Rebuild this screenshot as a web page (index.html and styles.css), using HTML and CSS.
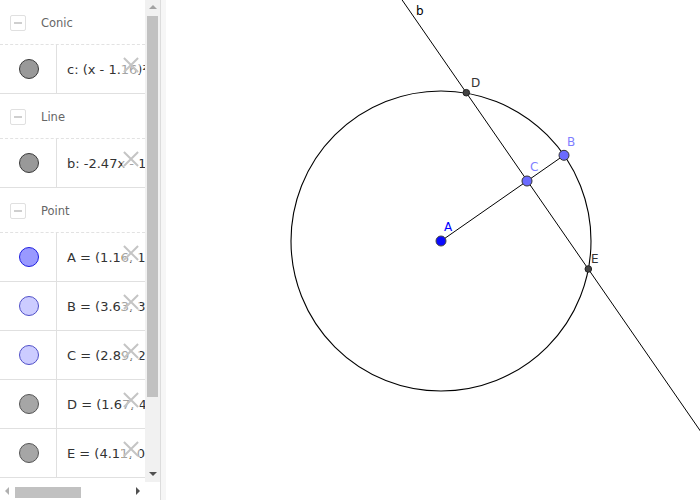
FILE: index.html
```html
<!DOCTYPE html>
<html>
<head>
<meta charset="utf-8">
<link rel="stylesheet" href="styles.css">
</head>
<body>
<div class="app">
  <aside class="algebra">
    <div class="list">
      <div class="group">
        <span class="toggle"></span><span class="group-name">Conic</span>
      </div>
      <div class="item">
        <div class="mark"><span class="dot dot-gray"></span></div>
        <div class="expr">c: (x - 1.16)² + (y - 1.19)² = 25</div>
        <span class="del"></span>
      </div>
      <div class="group">
        <span class="toggle"></span><span class="group-name">Line</span>
      </div>
      <div class="item">
        <div class="mark"><span class="dot dot-gray"></span></div>
        <div class="expr">b: -2.47x - 1.72y = -4.24</div>
        <span class="del"></span>
      </div>
      <div class="group">
        <span class="toggle"></span><span class="group-name">Point</span>
      </div>
      <div class="item">
        <div class="mark"><span class="dot dot-blue"></span></div>
        <div class="expr">A = (1.16, 1.19)</div>
        <span class="del"></span>
      </div>
      <div class="item">
        <div class="mark"><span class="dot dot-light"></span></div>
        <div class="expr">B = (3.63, 3.48)</div>
        <span class="del"></span>
      </div>
      <div class="item">
        <div class="mark"><span class="dot dot-light"></span></div>
        <div class="expr">C = (2.89, 2.4)</div>
        <span class="del"></span>
      </div>
      <div class="item">
        <div class="mark"><span class="dot dot-pt"></span></div>
        <div class="expr">D = (1.67, 4.16)</div>
        <span class="del"></span>
      </div>
      <div class="item">
        <div class="mark"><span class="dot dot-pt"></span></div>
        <div class="expr">E = (4.11, 0.67)</div>
        <span class="del"></span>
      </div>
    </div>
    <div class="vscroll">
      <span class="arrow-up"></span>
      <span class="vthumb"></span>
      <span class="arrow-down"></span>
    </div>
    <div class="hscroll">
      <span class="arrow-left"></span>
      <span class="hthumb"></span>
      <span class="arrow-right"></span>
    </div>
    <div class="corner"></div>
  </aside>
  <div class="divider"></div>
  <main class="graphics">
    <svg class="canvas" width="534" height="500" viewBox="166 0 534 500">
      <circle cx="441" cy="241" r="150" fill="none" stroke="#000" stroke-width="1.1"/>
      <line x1="395.2" y1="-10" x2="710" y2="444.9" stroke="#000" stroke-width="1"/>
      <line x1="441" y1="241" x2="564" y2="155.3" stroke="#000" stroke-width="1"/>
      <circle cx="441" cy="241" r="5" fill="#0a0aff" stroke="#444" stroke-width="1"/>
      <circle cx="564" cy="155.3" r="5" fill="#6b6bff" stroke="#333" stroke-width="1"/>
      <circle cx="527" cy="181" r="5" fill="#6b6bff" stroke="#333" stroke-width="1"/>
      <circle cx="466.3" cy="92.7" r="3.3" fill="#444" stroke="#222" stroke-width="1"/>
      <circle cx="588.3" cy="269" r="3.3" fill="#444" stroke="#222" stroke-width="1"/>
      <text class="lbl" x="416" y="15" fill="#000">b</text>
      <text class="lbl" x="471" y="87" fill="#333">D</text>
      <text class="lbl" x="530" y="171" fill="#7f7fff">C</text>
      <text class="lbl" x="567" y="146" fill="#7f7fff">B</text>
      <text class="lbl" x="444" y="231" fill="#0000ff">A</text>
      <text class="lbl" x="591" y="263" fill="#333">E</text>
    </svg>
  </main>
</div>
</body>
</html>
```
FILE: styles.css
```css
html, body {
  margin: 0;
  padding: 0;
  background: #fff;
}
body {
  font-family: "DejaVu Sans", sans-serif;
  width: 700px;
  height: 500px;
  overflow: hidden;
}
.app {
  display: flex;
  width: 700px;
  height: 500px;
}
.algebra {
  display: grid;
  grid-template-columns: 145px 15px;
  grid-template-rows: 482px 18px;
  width: 160px;
  flex: none;
}
.list {
  overflow: hidden;
  background: #fff;
}
.group {
  height: 44px;
  border-bottom: 1px dashed #e2e2e2;
  display: flex;
  align-items: center;
  padding-top: 1px;
  box-sizing: border-box;
  height: 45px;
}
.toggle {
  width: 14px;
  height: 14px;
  margin-left: 10px;
  border: 1px solid #e0e0e0;
  border-radius: 2px;
  position: relative;
  flex: none;
}
.toggle::after {
  content: "";
  position: absolute;
  left: 3px;
  right: 3px;
  top: 6px;
  height: 2px;
  background: #cfcfcf;
}
.group-name {
  margin-left: 15px;
  font-size: 11.5px;
  color: #666;
}
.item {
  height: 49px;
  box-sizing: border-box;
  border-bottom: 1px solid #e0e0e0;
  display: flex;
  position: relative;
  width: 145px;
}
.mark {
  width: 56px;
  flex: none;
  border-right: 1px solid #e0e0e0;
  display: flex;
  align-items: center;
  justify-content: center;
}
.dot {
  width: 18px;
  height: 18px;
  border-radius: 50%;
  box-sizing: content-box;
  margin-left: 1px;
}
.dot-gray { background: #999; border: 1px solid #3a3a3a; }
.dot-pt { background: #a6a6a6; border: 1px solid #555; }
.dot-blue { background: #9999ff; border: 1px solid #2020e0; }
.dot-light { background: #ccccff; border: 1px solid #5050c8; }
.expr {
  display: flex;
  align-items: center;
  padding-left: 10px;
  font-size: 13px;
  color: #333;
  white-space: nowrap;
  overflow: hidden;
  flex: 1;
  min-width: 0;
}
.del {
  position: absolute;
  left: 122px;
  top: 11px;
  width: 18px;
  height: 18px;
  background: rgba(255, 255, 255, 0.55);
}
.del::before, .del::after {
  content: "";
  position: absolute;
  left: 0;
  top: 8px;
  width: 20px;
  height: 2px;
  background: #c4c4c4;
  transform: rotate(45deg);
  left: -1px;
}
.del::after {
  transform: rotate(-45deg);
}
.vscroll {
  background: #f1f1f1;
  position: relative;
  display: flex;
  flex-direction: column;
  align-items: center;
}
.arrow-up {
  margin-top: 5px;
  width: 0;
  height: 0;
  border-left: 4px solid transparent;
  border-right: 4px solid transparent;
  border-bottom: 4px solid #a3a3a3;
}
.vthumb {
  margin-top: 7px;
  width: 11px;
  height: 381px;
  background: #c1c1c1;
}
.arrow-down {
  margin-top: auto;
  margin-bottom: 6px;
  width: 0;
  height: 0;
  border-left: 4px solid transparent;
  border-right: 4px solid transparent;
  border-top: 4px solid #505050;
}
.hscroll {
  background: #fff;
  display: flex;
  align-items: center;
  padding: 0 5px;
}
.arrow-left {
  width: 0;
  height: 0;
  border-top: 4px solid transparent;
  border-bottom: 4px solid transparent;
  border-right: 4px solid #b0b0b0;
  margin-top: -1px;
}
.hthumb {
  margin-left: 6px;
  width: 66px;
  height: 11px;
  background: #c1c1c1;
  margin-top: 2px;
}
.arrow-right {
  margin-left: auto;
  width: 0;
  height: 0;
  border-top: 4px solid transparent;
  border-bottom: 4px solid transparent;
  border-left: 4px solid #505050;
  margin-right: 0;
}
.corner {
  background: #fff;
}
.divider {
  width: 5px;
  flex: none;
  background: #f6f6f6;
  border-left: 1px solid #dcdcdc;
}
.graphics {
  flex: 1;
  background: #fff;
  overflow: hidden;
}
.canvas {
  display: block;
}
.lbl {
  font-family: "DejaVu Sans", sans-serif;
  font-size: 12px;
}
```
